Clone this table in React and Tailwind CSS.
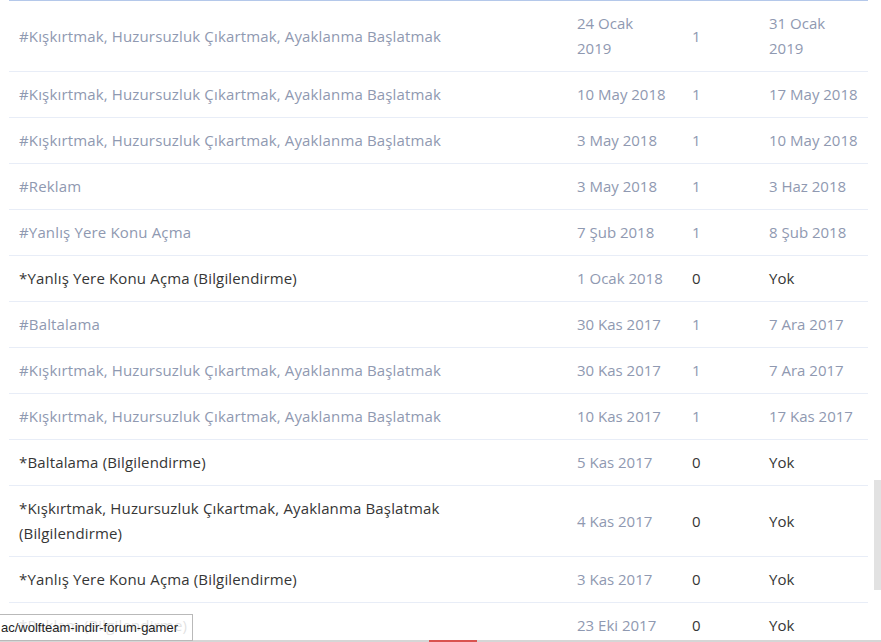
import React from 'react';

const muted = 'text-[#8f99b1]';
const dark = 'text-[#363636]';

const rows = [
  { title: '#Kışkırtmak, Huzursuzluk Çıkartmak, Ayaklanma Başlatmak', date: ['24 Ocak', '2019'], count: '1', end: ['31 Ocak', '2019'], warn: false },
  { title: '#Kışkırtmak, Huzursuzluk Çıkartmak, Ayaklanma Başlatmak', date: ['10 May 2018'], count: '1', end: ['17 May 2018'], warn: false },
  { title: '#Kışkırtmak, Huzursuzluk Çıkartmak, Ayaklanma Başlatmak', date: ['3 May 2018'], count: '1', end: ['10 May 2018'], warn: false },
  { title: '#Reklam', date: ['3 May 2018'], count: '1', end: ['3 Haz 2018'], warn: false },
  { title: '#Yanlış Yere Konu Açma', date: ['7 Şub 2018'], count: '1', end: ['8 Şub 2018'], warn: false },
  { title: '*Yanlış Yere Konu Açma (Bilgilendirme)', date: ['1 Ocak 2018'], count: '0', end: ['Yok'], warn: true },
  { title: '#Baltalama', date: ['30 Kas 2017'], count: '1', end: ['7 Ara 2017'], warn: false },
  { title: '#Kışkırtmak, Huzursuzluk Çıkartmak, Ayaklanma Başlatmak', date: ['30 Kas 2017'], count: '1', end: ['7 Ara 2017'], warn: false },
  { title: '#Kışkırtmak, Huzursuzluk Çıkartmak, Ayaklanma Başlatmak', date: ['10 Kas 2017'], count: '1', end: ['17 Kas 2017'], warn: false },
  { title: '*Baltalama (Bilgilendirme)', date: ['5 Kas 2017'], count: '0', end: ['Yok'], warn: true },
  { title: ['*Kışkırtmak, Huzursuzluk Çıkartmak, Ayaklanma Başlatmak', '(Bilgilendirme)'], date: ['4 Kas 2017'], count: '0', end: ['Yok'], warn: true },
  { title: '*Yanlış Yere Konu Açma (Bilgilendirme)', date: ['3 Kas 2017'], count: '0', end: ['Yok'], warn: true },
  { title: '*Reklam (Bilgilendirme)', date: ['23 Eki 2017'], count: '0', end: ['Yok'], warn: true },
];

function Lines({ value }) {
  const list = Array.isArray(value) ? value : [value];
  return list.map((line, i) => <div key={i}>{line}</div>);
}

export default function App() {
  return (
    <div className="relative h-[642px] w-[881px] overflow-hidden bg-white font-['Open_Sans',sans-serif] text-[15px] leading-[25px]">
      <div className="pl-[9px] w-[869px]">
        <table className="w-[859px] table-fixed border-collapse border-t border-[#b4c8ea]">
          <colgroup>
            <col className="w-[558px]" />
            <col className="w-[115px]" />
            <col className="w-[77px]" />
            <col className="w-[109px]" />
          </colgroup>
          <tbody>
            {rows.map((row, i) => (
              <tr key={i} className="border-b border-[#e8edf7] align-middle">
                <td className={`px-[10px] py-[10px] whitespace-nowrap tracking-[0.15px] ${row.warn ? dark : muted}`}>
                  <Lines value={row.title} />
                </td>
                <td className={`px-[10px] py-[10px] whitespace-nowrap ${muted}`}>
                  <Lines value={row.date} />
                </td>
                <td className={`px-[10px] py-[10px] ${row.warn ? dark : muted}`}>{row.count}</td>
                <td className={`px-[10px] py-[10px] whitespace-nowrap ${row.warn ? dark : muted}`}>
                  <Lines value={row.end} />
                </td>
              </tr>
            ))}
          </tbody>
        </table>
      </div>

      {/* page scrollbar thumb */}
      <div className="absolute right-0 top-[480px] h-[110px] w-[7px] bg-[#e2e2e2]" />

      {/* bottom edge */}
      <div className="absolute bottom-0 left-0 h-[2px] w-full bg-[#d6d6d6]" />
      <div className="absolute bottom-0 left-[429px] h-[2px] w-[48px] bg-[#d9534f]" />

      {/* browser status link tooltip */}
      <div className="absolute bottom-[1px] left-0 h-[27px] w-[193px] overflow-hidden whitespace-nowrap border border-l-0 border-[#b9b9b9] bg-white/85 pl-[1px] font-['Liberation_Sans',sans-serif] text-[13px] leading-[25px] text-[#222]">
        ac/wolfteam-indir-forum-gamer
      </div>
    </div>
  );
}
